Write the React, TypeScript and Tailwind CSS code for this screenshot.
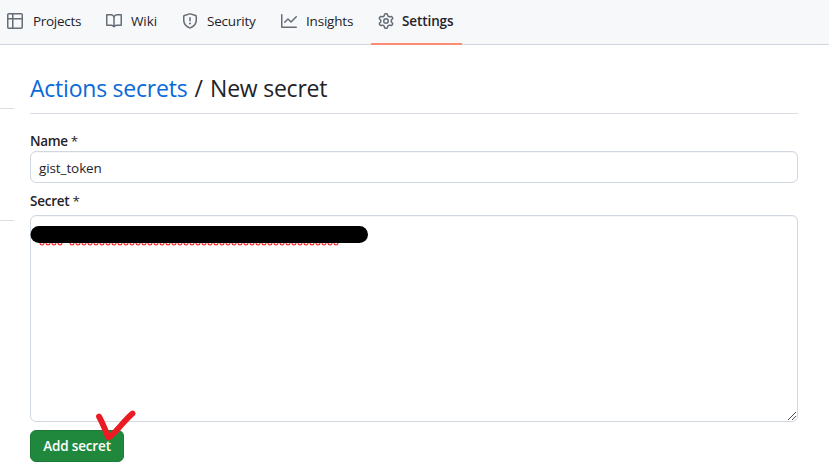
import React from "react";

const icons = {
  table:
    "M0 1.75C0 .784.784 0 1.75 0h12.5C15.216 0 16 .784 16 1.75v12.5A1.75 1.75 0 0 1 14.25 16H1.75A1.75 1.75 0 0 1 0 14.25ZM6.5 6.5v8h7.75a.25.25 0 0 0 .25-.25V6.5Zm8-1.5V1.75a.25.25 0 0 0-.25-.25H6.5V5Zm-13 1.5v7.75c0 .138.112.25.25.25H5v-8ZM5 5V1.5H1.75a.25.25 0 0 0-.25.25V5Z",
  book: "M0 1.75A.75.75 0 0 1 .75 1h4.253c1.227 0 2.317.59 3 1.501A3.743 3.743 0 0 1 11.006 1h4.245a.75.75 0 0 1 .75.75v10.5a.75.75 0 0 1-.75.75h-4.507a2.25 2.25 0 0 0-1.591.659l-.622.621a.75.75 0 0 1-1.06 0l-.622-.621A2.25 2.25 0 0 0 5.258 13H.75a.75.75 0 0 1-.75-.75Zm7.251 10.324.004-5.073-.002-2.253A2.25 2.25 0 0 0 5.003 2.5H1.5v9h3.757a3.75 3.75 0 0 1 1.994.574ZM8.755 4.75l-.004 7.322a3.752 3.752 0 0 1 1.992-.572H14.5v-9h-3.495a2.25 2.25 0 0 0-2.25 2.25Z",
  shield:
    "M7.467.133a1.748 1.748 0 0 1 1.066 0l5.25 1.68A1.75 1.75 0 0 1 15 3.48V7c0 1.566-.32 3.182-1.303 4.682-.983 1.498-2.585 2.813-5.032 3.855a1.697 1.697 0 0 1-1.33 0c-2.447-1.042-4.049-2.357-5.032-3.855C1.32 10.182 1 8.566 1 7V3.48a1.75 1.75 0 0 1 1.217-1.667Zm.61 1.429a.25.25 0 0 0-.153 0l-5.25 1.68a.25.25 0 0 0-.174.238V7c0 1.358.275 2.666 1.057 3.86.784 1.194 2.121 2.34 4.366 3.297a.196.196 0 0 0 .154 0c2.245-.956 3.582-2.104 4.366-3.298C13.225 9.666 13.5 8.36 13.5 7V3.48a.251.251 0 0 0-.174-.237l-5.25-1.68ZM8.75 4.75v3a.75.75 0 0 1-1.5 0v-3a.75.75 0 0 1 1.5 0ZM9 10.5a1 1 0 1 1-2 0 1 1 0 0 1 2 0Z",
  graph:
    "M1.5 1.75V13.5h13.75a.75.75 0 0 1 0 1.5H.75a.75.75 0 0 1-.75-.75V1.75a.75.75 0 0 1 1.5 0Zm14.28 2.53-5.25 5.25a.75.75 0 0 1-1.06 0L7 7.06 4.28 9.78a.751.751 0 0 1-1.042-.018.751.751 0 0 1-.018-1.042l3.25-3.25a.75.75 0 0 1 1.06 0L10 7.94l4.72-4.72a.751.751 0 0 1 1.042.018.751.751 0 0 1 .018 1.042Z",
  gear: "M8 0a8.2 8.2 0 0 1 .701.031C9.444.095 9.99.645 10.16 1.29l.288 1.107c.018.066.079.158.212.224.231.114.454.243.668.386.123.082.233.09.299.071l1.103-.303c.644-.176 1.392.021 1.82.63.27.385.506.792.704 1.218.315.675.111 1.422-.364 1.891l-.814.806c-.049.048-.098.147-.088.294.016.257.016.515 0 .772-.01.147.038.246.088.294l.814.806c.475.469.679 1.216.364 1.891a7.977 7.977 0 0 1-.704 1.217c-.428.61-1.176.807-1.82.63l-1.102-.302c-.067-.019-.177-.011-.3.071a5.909 5.909 0 0 1-.668.386c-.133.066-.194.158-.211.224l-.29 1.106c-.168.646-.715 1.196-1.458 1.26a8.006 8.006 0 0 1-1.402 0c-.743-.064-1.289-.614-1.458-1.26l-.289-1.106c-.018-.066-.079-.158-.212-.224a5.738 5.738 0 0 1-.668-.386c-.123-.082-.233-.09-.299-.071l-1.103.303c-.644.176-1.392-.021-1.82-.63a8.12 8.12 0 0 1-.704-1.218c-.315-.675-.111-1.422.363-1.891l.815-.806c.05-.048.098-.147.088-.294a6.214 6.214 0 0 1 0-.772c.01-.147-.038-.246-.088-.294l-.815-.806C.635 6.045.431 5.298.746 4.623a7.92 7.92 0 0 1 .704-1.217c.428-.61 1.176-.807 1.82-.63l1.102.302c.067.019.177.011.3-.071.214-.143.437-.272.668-.386.133-.066.194-.158.211-.224l.29-1.106C6.009.645 6.556.095 7.299.03 7.53.01 7.764 0 8 0Zm-.571 1.525c-.036.003-.108.036-.137.146l-.289 1.105c-.147.561-.549.967-.998 1.189-.173.086-.34.183-.5.29-.417.278-.97.423-1.529.27l-1.103-.303c-.109-.03-.175.016-.195.045-.22.312-.412.644-.573.99-.014.031-.021.11.059.19l.815.806c.411.406.562.957.53 1.456a4.709 4.709 0 0 0 0 .582c.032.499-.119 1.05-.53 1.456l-.815.806c-.081.08-.073.159-.059.19.162.346.353.677.573.989.02.03.085.076.195.046l1.102-.303c.56-.153 1.113-.008 1.53.27.161.107.328.204.501.29.447.222.85.629.997 1.189l.289 1.105c.029.109.101.143.137.146a6.6 6.6 0 0 0 1.142 0c.036-.003.108-.036.137-.146l.289-1.105c.147-.561.549-.967.998-1.189.173-.086.34-.183.5-.29.417-.278.97-.423 1.529-.27l1.103.303c.109.029.175-.016.195-.045.22-.313.411-.644.573-.99.014-.031.021-.11-.059-.19l-.815-.806c-.411-.406-.562-.957-.53-1.456a4.709 4.709 0 0 0 0-.582c-.032-.499.119-1.05.53-1.456l.815-.806c.081-.08.073-.159.059-.19a6.464 6.464 0 0 0-.573-.989c-.02-.03-.085-.076-.195-.046l-1.102.303c-.56.153-1.113.008-1.53-.27a4.44 4.44 0 0 0-.501-.29c-.447-.222-.85-.629-.997-1.189l-.289-1.105c-.029-.11-.101-.143-.137-.146a6.6 6.6 0 0 0-1.142 0ZM11 8a3 3 0 1 1-6 0 3 3 0 0 1 6 0ZM9.5 8a1.5 1.5 0 1 0-3.001.001A1.5 1.5 0 0 0 9.5 8Z",
};

const tabs: { label: string; icon: keyof typeof icons; width: string; text: string; active?: boolean }[] = [
  { label: "Projects", icon: "table", width: "w-[99px]", text: "pl-px tracking-[-0.3px]" },
  { label: "Wiki", icon: "book", width: "w-[76px]", text: "tracking-[-0.1px]" },
  { label: "Security", icon: "shield", width: "w-[99px]", text: "tracking-[-0.2px]" },
  { label: "Insights", icon: "graph", width: "w-[97px]", text: "tracking-[-0.2px]" },
  { label: "Settings", icon: "gear", width: "w-[91px]", text: "-ml-px font-semibold tracking-[-0.1px]", active: true },
];

// Spelling marks under the two words hidden by the redaction bar.
const marks = [
  ...Array.from({ length: 4 }, (_, i) => 12 + i * 6),
  ...Array.from({ length: 45 }, (_, i) => 42 + i * 6),
];

export default function App() {
  return (
    <div className="h-[472px] w-[829px] overflow-hidden bg-white font-['Open_Sans','Noto_Sans',sans-serif] text-[13.5px] text-[#1f2328]">
      <nav className="flex h-[45px] border-b border-[#d0d7de] bg-[#f6f8fa]">
        {tabs.map((t) => (
          <a
            key={t.label}
            className={`flex h-[45px] shrink-0 items-center pl-[7px] ${t.width} ${t.active ? "border-b-2 border-[#fd8c73] pb-px" : "pb-[3px]"}`}
          >
            <svg width="16" height="16" viewBox="0 0 16 16" className="mr-[9px] shrink-0 fill-[#656d76]">
              <path d={icons[t.icon]} />
            </svg>
            <span className={`whitespace-nowrap ${t.text}`}>{t.label}</span>
          </a>
        ))}
      </nav>

      <div className="flex gap-4">
        <aside className="w-[14px] pt-[63px]">
          <hr className="border-[#d8dee4]" />
          <hr className="mt-[111px] border-[#d8dee4]" />
        </aside>

        <main className="w-[768px] pt-[26px]">
          <h1 className="h-[43px] border-b border-[#d8dee4] text-[23px] leading-[34px] tracking-[-0.23px] whitespace-nowrap">
            <a className="text-[#0969da]">Actions secrets</a>
            <span className="mx-[1.5px]"> / </span>New secret
          </h1>
          <label className="mt-[17px] block h-5 leading-5 font-semibold tracking-[-0.35px]">
            Name <span className="font-normal">*</span>
          </label>
          <div className="flex h-8 items-center rounded-md border border-[#d0d7de] px-2 pt-[2px] tracking-[-0.1px] shadow-[inset_0_1px_0_rgba(208,215,222,0.2)]">
            gist_token
          </div>
          <label className="mt-2 block h-6 leading-5 font-semibold tracking-[-0.25px]">
            Secret <span className="font-normal">*</span>
          </label>
          <div className="relative h-[207px] rounded-md border border-[#d0d7de] shadow-[inset_0_1px_0_rgba(208,215,222,0.2)]">
            <svg width="340" height="34" className="absolute -top-px -left-px">
              <g fill="none" stroke="#f33" strokeWidth="1.2">
                {marks.map((x) => (
                  <circle key={x} cx={x} cy="28" r="1.9" />
                ))}
              </g>
              <rect x="0.5" y="11" width="337.5" height="17" rx="8.5" />
            </svg>
            <svg width="9" height="9" className="absolute right-0 bottom-px" shapeRendering="crispEdges">
              <g fill="#555">
                {[0, 1, 2, 3, 4, 5, 6, 7].map((i) => (
                  <rect key={i} x={i} y={8 - i} width="1" height="1" />
                ))}
                {[0, 1, 2, 3].map((i) => (
                  <rect key={i} x={4 + i} y={8 - i} width="1" height="1" />
                ))}
              </g>
            </svg>
          </div>
          <div className="relative mt-2">
            <button className="flex h-8 w-[94px] items-center justify-center rounded-md border border-[#1c7c38] bg-[#1f883d] pt-px font-semibold tracking-[-0.15px] whitespace-nowrap text-white">
              Add secret
            </button>
            <svg width="50" height="40" className="absolute -top-[24px] left-[60px]">
              <path d="M9 10.5C12 16 15 23 18 31C19 32 22 29 24 27C30 21 35 14 42.5 7.5" fill="none" stroke="#ea1b22" strokeWidth="5.8" strokeLinecap="round" strokeLinejoin="round" />
            </svg>
          </div>
        </main>
      </div>
    </div>
  );
}
